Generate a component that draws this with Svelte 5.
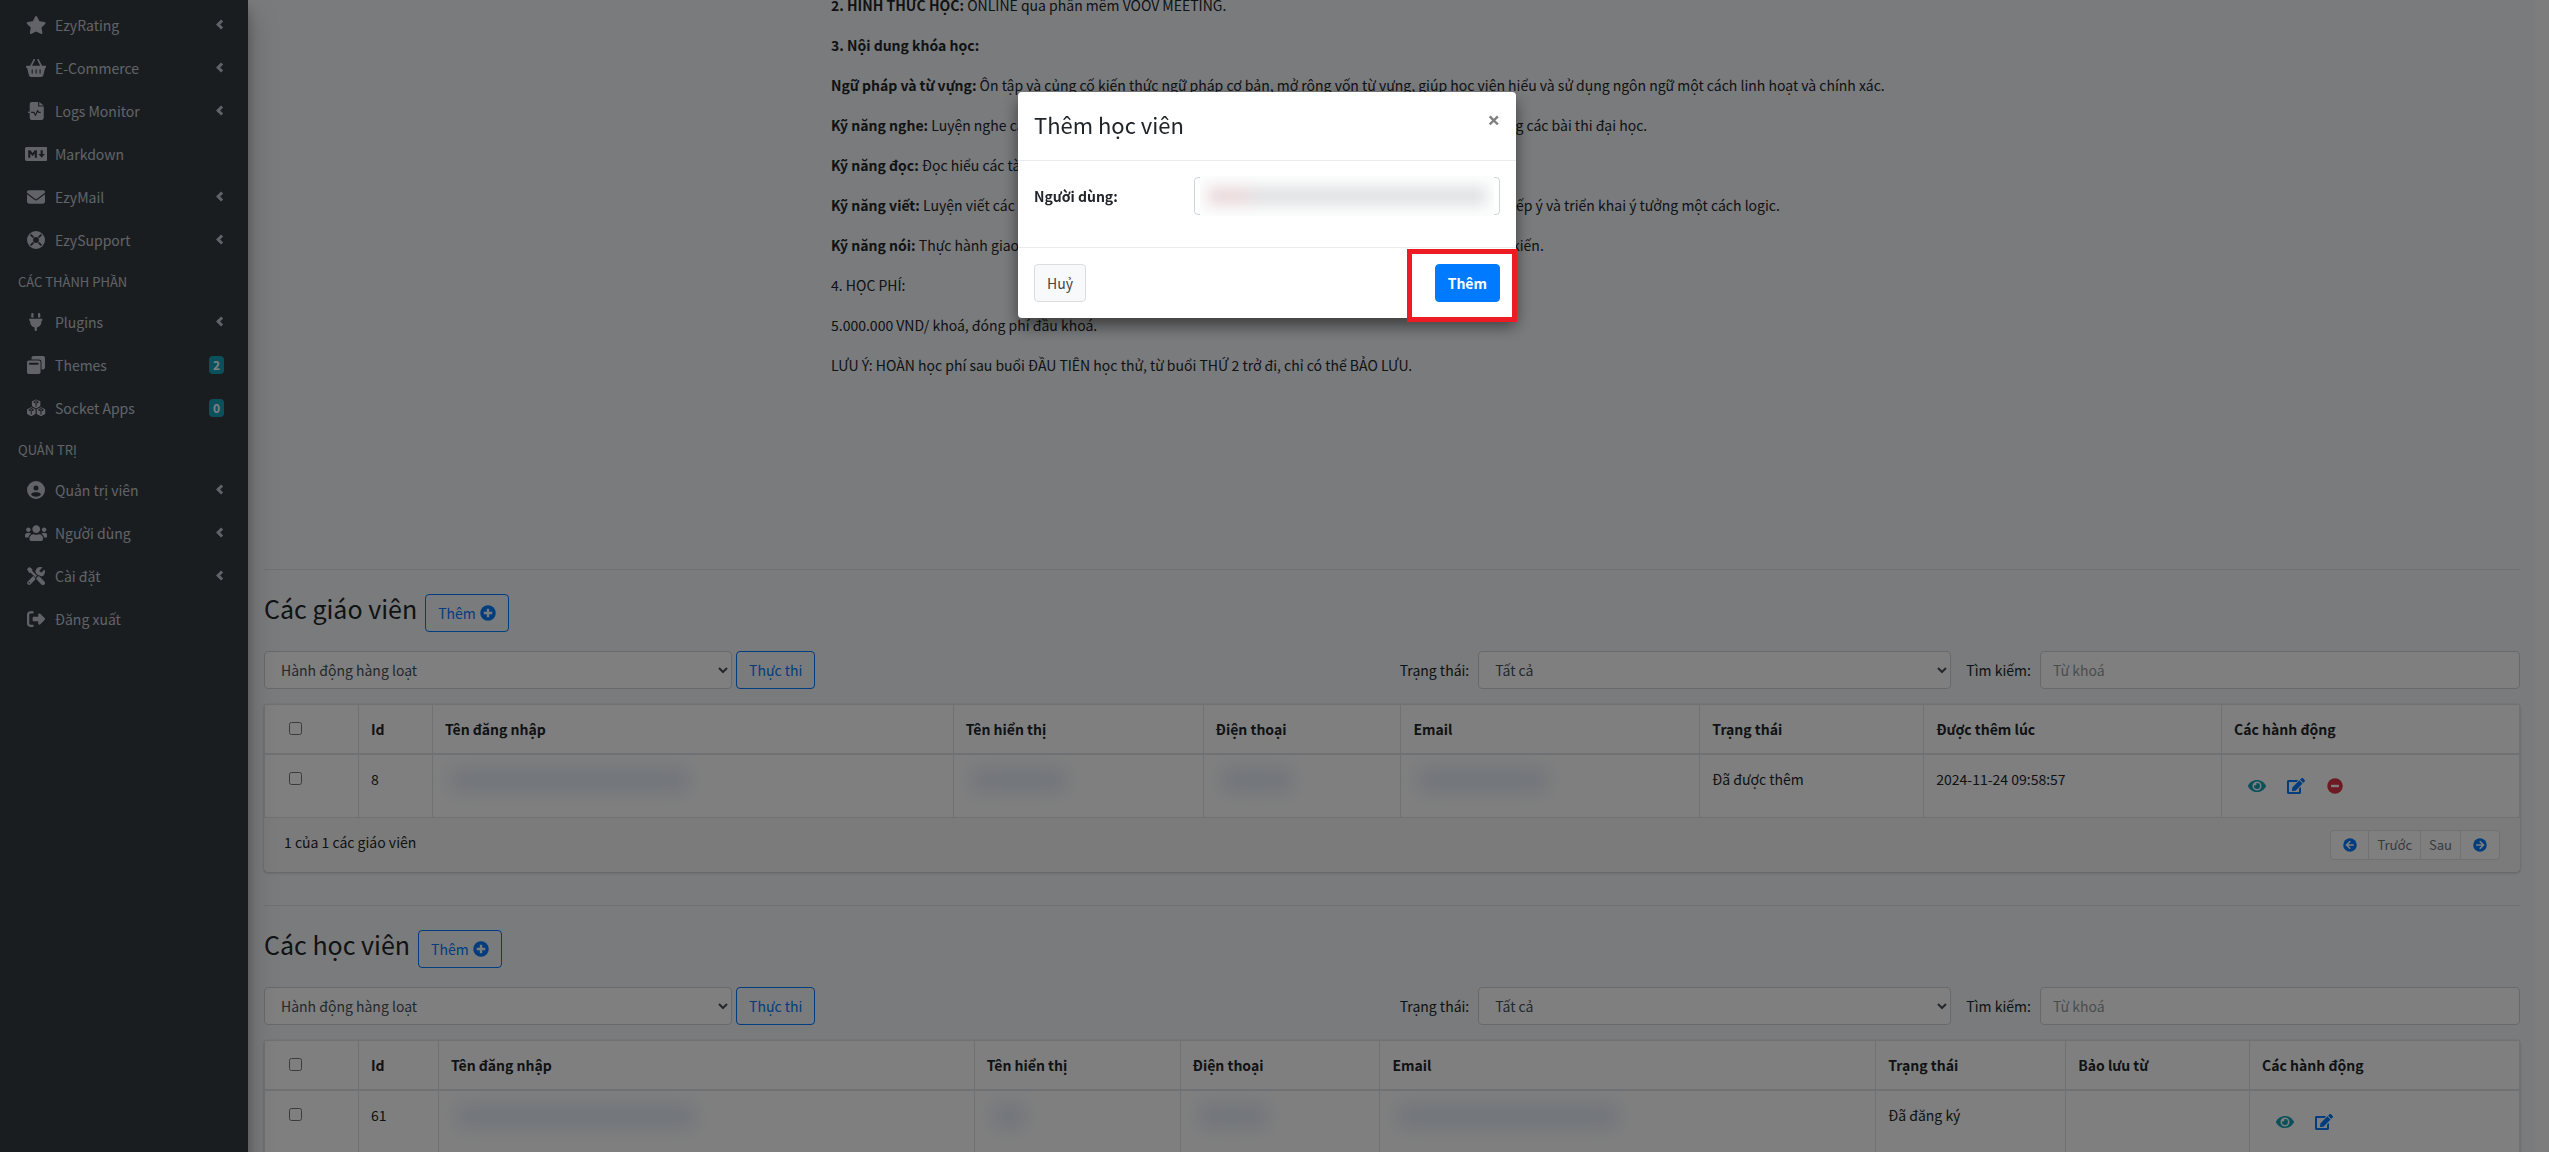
<script>
	const bg = '#343a40'
	const hex = (x, y) => `<path d="M${x} ${y - 132}l120 54v136l-120 66-120-66v-136z"/><path d="M${x - 74} ${y - 58}L${x} ${y - 26}l74-32M${x} ${y - 26}v100M${x - 50} ${y - 70}l50-22 50 22" fill="none" stroke="${bg}" stroke-width="30"/>`

	// [viewBox width, markup], all icons are 512 high
	const icons = {
		star: [576, '<path d="M259.3 17.8L194 150.2 47.9 171.5c-26.2 3.8-36.7 36.1-17.7 54.6l105.7 103-25 145.5c-4.5 26.3 23.2 46 46.4 33.7L288 439.6l130.7 68.7c23.2 12.2 50.9-7.4 46.4-33.7l-25-145.5 105.7-103c19-18.5 8.5-50.8-17.7-54.6L382 150.2 316.7 17.8c-11.7-23.6-45.6-23.9-57.4 0z"/>'],
		basket: [576, '<path d="M253.3 35.1c6.1-11.8 1.5-26.3-10.2-32.4s-26.3-1.5-32.4 10.2L117.6 192H32c-17.7 0-32 14.3-32 32s14.3 32 32 32L83.9 463.5C91 492 116.6 512 146 512H430c29.4 0 55-20 62.1-48.5L544 256c17.7 0 32-14.3 32-32s-14.3-32-32-32H458.4L365.3 12.9C359.2 1.2 344.7-3.4 332.9 2.7s-16.3 20.6-10.2 32.4L404.3 192H171.7L253.3 35.1zM192 304v96c0 8.8-7.2 16-16 16s-16-7.2-16-16V304c0-8.8 7.2-16 16-16s16 7.2 16 16zm96-16c8.8 0 16 7.2 16 16v96c0 8.8-7.2 16-16 16s-16-7.2-16-16V304c0-8.8 7.2-16 16-16zm128 16v96c0 8.8-7.2 16-16 16s-16-7.2-16-16V304c0-8.8 7.2-16 16-16s16 7.2 16 16z"/>'],
		logs: [448, `<path d="M112 0h176v128h160v320a64 64 0 0 1-64 64H112a64 64 0 0 1-64-64V64A64 64 0 0 1 112 0z"/><path d="M320 0l128 96H320z"/><path d="M48 296h120l44 80 60-130 34 50h54" fill="none" stroke="${bg}" stroke-width="34"/><path d="M0 274h90v36H0z"/>`],
		markdown: [640, '<path d="M593.8 59.1H46.2C20.7 59.1 0 79.8 0 105.2v301.5c0 25.5 20.7 46.2 46.2 46.2h547.7c25.5 0 46.2-20.7 46.1-46.1V105.2c0-25.4-20.7-46.1-46.2-46.1zM338.5 360.6H277v-120l-61.5 76.9-61.5-76.9v120H92.3V151.4h61.5l61.5 76.9 61.5-76.9h61.5v209.2zm135.3 3.1L381.5 256H443V151.4h61.5V256H566z"/>'],
		mail: [512, '<path d="M48 64C21.5 64 0 85.5 0 112c0 15.1 7.1 29.3 19.2 38.4L236.8 313.6c11.4 8.5 27 8.5 38.4 0L492.8 150.4c12.1-9.1 19.2-23.3 19.2-38.4c0-26.5-21.5-48-48-48H48zM0 176V384c0 35.3 28.7 64 64 64H448c35.3 0 64-28.7 64-64V176L294.4 339.2c-22.8 17.1-54 17.1-76.8 0L0 176z"/>'],
		support: [512, `<circle cx="256" cy="256" r="256"/><circle cx="256" cy="256" r="84" fill="${bg}"/><path d="M116 116l52 52M396 116l-52 52M116 396l52-52M396 396l-52-52" stroke="${bg}" stroke-width="52" stroke-linecap="round"/>`],
		plug: [384, '<path d="M96 0C78.3 0 64 14.3 64 32v96h64V32c0-17.7-14.3-32-32-32zM288 0c-17.7 0-32 14.3-32 32v96h64V32c0-17.7-14.3-32-32-32zM32 160c-17.7 0-32 14.3-32 32s14.3 32 32 32v32c0 77.4 55 142 128 156.8V480c0 17.7 14.3 32 32 32s32-14.3 32-32V412.8C297 398 352 333.4 352 256V224c17.7 0 32-14.3 32-32s-14.3-32-32-32H32z"/>'],
		themes: [512, `<rect x="128" width="384" height="384" rx="56"/><rect x="-28" y="96" width="440" height="444" rx="70" fill="${bg}"/><rect y="128" width="384" height="384" rx="52"/><path d="M80 192h224a16 16 0 0 1 0 56H80a16 16 0 0 1 0-56z" fill="${bg}"/>`],
		cubes: [576, hex(288, 144) + hex(150, 366) + hex(426, 366)],
		user: [512, '<path d="M399 384.2C376.9 345.8 335.4 320 288 320H224c-47.4 0-88.9 25.8-111 64.2c35.2 39.2 86.2 63.8 143 63.8s107.8-24.7 143-63.8zM0 256a256 256 0 1 1 512 0A256 256 0 1 1 0 256zm256 16a72 72 0 1 0 0-144 72 72 0 1 0 0 144z" fill-rule="evenodd"/>'],
		users: [640, '<path d="M96 224c35.3 0 64-28.7 64-64s-28.7-64-64-64-64 28.7-64 64 28.7 64 64 64zm448 0c35.3 0 64-28.7 64-64s-28.7-64-64-64-64 28.7-64 64 28.7 64 64 64zm32 32h-64c-17.6 0-33.5 7.1-45.1 18.6 40.3 22.1 68.9 62 75.1 109.4h66c17.7 0 32-14.3 32-32v-32c0-35.3-28.7-64-64-64zm-256 0c61.9 0 112-50.1 112-112S381.9 32 320 32 208 82.1 208 144s50.1 112 112 112zm76.8 32h-8.3c-20.8 10-43.9 16-68.5 16s-47.6-6-68.5-16h-8.3C179.6 288 128 339.6 128 403.2V432c0 26.5 21.5 48 48 48h288c26.5 0 48-21.5 48-48v-28.8c0-63.6-51.6-115.2-115.2-115.2zm-223.7-13.4C161.5 263.1 145.6 256 128 256H64c-35.3 0-64 28.7-64 64v32c0 17.7 14.3 32 32 32h65.9c6.3-47.4 34.9-87.3 75.2-109.4z"/>'],
		tools: [512, `<path d="M62 450L330 182" stroke="currentColor" stroke-width="112" stroke-linecap="round"/><circle cx="376" cy="136" r="136"/><path d="M376 136L530-18" stroke="${bg}" stroke-width="84"/><circle cx="66" cy="446" r="22" fill="${bg}"/><path d="M90 90l220 220" stroke="${bg}" stroke-width="112"/><path d="M0 64L64 0l86 60v56l180 180-44 44-180-180H60z"/><path d="M330 330l116 116" stroke="${bg}" stroke-width="180" stroke-linecap="round"/><path d="M330 330l122 122" stroke="currentColor" stroke-width="120" stroke-linecap="round"/>`],
		exit: [512, '<path d="M377.9 105.9L500.7 228.7c7.2 7.2 11.3 17.1 11.3 27.3s-4.1 20.1-11.3 27.3L377.9 406.1c-6.4 6.4-15 9.9-24 9.9c-18.7 0-33.9-15.2-33.9-33.9l0-62.1-128 0c-17.7 0-32-14.3-32-32l0-64c0-17.7 14.3-32 32-32l128 0 0-62.1c0-18.7 15.2-33.9 33.9-33.9c9 0 17.6 3.6 24 9.9zM160 96L96 96c-17.7 0-32 14.3-32 32l0 256c0 17.7 14.3 32 32 32l64 0c17.7 0 32 14.3 32 32s-14.3 32-32 32l-64 0c-53 0-96-43-96-96L0 128C0 75 43 32 96 32l64 0c17.7 0 32 14.3 32 32s-14.3 32-32 32z"/>'],
		angle: [256, '<path d="M196 112L68 240l128 128" fill="none" stroke="currentColor" stroke-width="96"/>'],
		plus: [512, '<circle cx="256" cy="256" r="248"/><path d="M256 120v272M120 256h272" stroke="#f4f6f9" stroke-width="76"/>'],
		minus: [512, '<circle cx="256" cy="256" r="248"/><path d="M130 256h252" stroke="#fff" stroke-width="76"/>'],
		left: [512, '<circle cx="256" cy="256" r="248"/><path d="M396 256H136M264 120L128 256l136 136" fill="none" stroke="#fff" stroke-width="58"/>'],
		right: [512, '<circle cx="256" cy="256" r="248"/><path d="M116 256h260M248 120l136 136-136 136" fill="none" stroke="#fff" stroke-width="58"/>'],
		edit: [576, '<path d="M402.6 83.2l90.2 90.2c3.8 3.8 3.8 10 0 13.8L274.4 405.6l-92.8 10.3c-12.4 1.4-22.9-9.1-21.5-21.5l10.3-92.8L388.8 83.2c3.8-3.8 10-3.8 13.8 0zm162-22.9l-48.8-48.8c-15.2-15.2-39.9-15.2-55.2 0l-35.4 35.4c-3.8 3.8-3.8 10 0 13.8l90.2 90.2c3.8 3.8 10 3.8 13.8 0l35.4-35.4c15.2-15.3 15.2-40 0-55.2zM384 346.2V448H64V128h229.8c3.2 0 6.2-1.3 8.5-3.5l40-40c7.6-7.6 2.2-20.5-8.5-20.5H48C21.5 64 0 85.5 0 112v352c0 26.5 21.5 48 48 48h352c26.5 0 48-21.5 48-48V306.2c0-10.7-12.9-16-20.5-8.5l-40 40c-2.2 2.3-3.5 5.3-3.5 8.5z"/>'],
		eye: [576, '<path d="M572.52 241.4C518.29 135.59 410.93 64 288 64S57.68 135.64 3.48 241.41a32.35 32.35 0 0 0 0 29.19C57.71 376.41 165.07 448 288 448s230.32-71.64 284.52-177.41a32.35 32.35 0 0 0 0-29.19zM288 400a144 144 0 1 1 144-144 143.93 143.93 0 0 1-144 144zm0-240a95.31 95.31 0 0 0-25.31 3.79 47.85 47.85 0 0 1-66.9 66.9A95.78 95.78 0 1 0 288 160z"/>']
	}

	const menu = [
		{ icon: 'star', label: 'EzyRating', more: true },
		{ icon: 'basket', label: 'E-Commerce', more: true },
		{ icon: 'logs', label: 'Logs Monitor', more: true },
		{ icon: 'markdown', label: 'Markdown' },
		{ icon: 'mail', label: 'EzyMail', more: true },
		{ icon: 'support', label: 'EzySupport', more: true },
		{ header: 'CÁC THÀNH PHẦN' },
		{ icon: 'plug', label: 'Plugins', more: true },
		{ icon: 'themes', label: 'Themes', badge: '2' },
		{ icon: 'cubes', label: 'Socket Apps', badge: '0' },
		{ header: 'QUẢN TRỊ' },
		{ icon: 'user', label: 'Quản trị viên', more: true },
		{ icon: 'users', label: 'Người dùng', more: true },
		{ icon: 'tools', label: 'Cài đặt', more: true },
		{ icon: 'exit', label: 'Đăng xuất' }
	]

	const course = [
		['2. HÌNH THỨC HỌC:', 'ONLINE qua phần mềm VOOV MEETING.'],
		['3. Nội dung khóa học:', ''],
		['Ngữ pháp và từ vựng:', 'Ôn tập và củng cố kiến thức ngữ pháp cơ bản, mở rộng vốn từ vựng, giúp học viên hiểu và sử dụng ngôn ngữ một cách linh hoạt và chính xác.'],
		['Kỹ năng nghe:', 'Luyện nghe các đoạn hội thoại, bài giảng và bản tin ngắn, làm quen với những câu hỏi trong các bài thi đại học.'],
		['Kỹ năng đọc:', 'Đọc hiểu các tài liệu, bài báo, đoạn văn học thuật và trả lời câu hỏi.'],
		['Kỹ năng viết:', 'Luyện viết các câu văn, bài luận, thư từ và báo cáo, hướng dẫn học viên cách lập dàn ý, sắp xếp ý và triển khai ý tưởng một cách logic.'],
		['Kỹ năng nói:', 'Thực hành giao tiếp qua các tình huống thực tế, thảo luận nhóm, thuyết trình và trình bày ý kiến.'],
		['', '4. HỌC PHÍ:'],
		['', '5.000.000 VND/ khoá, đóng phí đầu khoá.'],
		['', 'LƯU Ý: HOÀN học phí sau buổi ĐẦU TIÊN học thử, từ buổi THỨ 2 trở đi, chỉ có thể BẢO LƯU.']
	]

	// a number in a row is the width of a masked value
	const sections = [
		{
			id: 'teachers',
			title: 'Các giáo viên',
			columns: [['Id', 74], ['Tên đăng nhập', 521], ['Tên hiển thị', 250], ['Điện thoại', 198], ['Email', 299], ['Trạng thái', 224], ['Được thêm lúc', 298], ['Các hành động', 298]],
			row: ['8', 240, 96, 72, 130, 'Đã được thêm', '2024-11-24 09:58:57'],
			removable: true,
			footer: '1 của 1 các giáo viên'
		},
		{
			id: 'students',
			title: 'Các học viên',
			columns: [['Id', 80], ['Tên đăng nhập', 536], ['Tên hiển thị', 206], ['Điện thoại', 200], ['Email', 496], ['Trạng thái', 190], ['Bảo lưu từ', 184], ['Các hành động', 270]],
			row: ['61', 240, 34, 70, 222, 'Đã đăng ký', ''],
			footer: '1 của 1 các học viên'
		}
	]
</script>

{#snippet icon(name)}
	<svg class="icon" viewBox="0 0 {icons[name][0]} 512" style="width: {icons[name][0] / 512}em" aria-hidden="true">{@html icons[name][1]}</svg>
{/snippet}

<div class="shell">
	<aside>
		<nav>
			{#each menu as item}
				{#if item.header}
					<div class="nav-header">{item.header}</div>
				{:else}
					<a href="#menu" class="nav-item">
						<span class="nav-icon">{@render icon(item.icon)}</span>
						<span class="nav-label">{item.label}</span>
						{#if item.more}{@render icon('angle')}{/if}
						{#if item.badge}<span class="badge">{item.badge}</span>{/if}
					</a>
				{/if}
			{/each}
		</nav>
	</aside>

	<main>
		<article>
			{#each course as [term, text]}
				<p>{#if term}<b>{term}</b>{/if} {text}</p>
			{/each}
		</article>

		{#each sections as s}
			<section>
				<div class="title">
					<h2>{s.title}</h2>
					<button class="btn outline">Thêm {@render icon('plus')}</button>
				</div>

				<div class="toolbar">
					<select class="control" aria-label="Hành động hàng loạt">
						<option>Hành động hàng loạt</option>
					</select>
					<button class="btn outline">Thực thi</button>
					<label class="status-label" for="{s.id}-status">Trạng thái:</label>
					<select class="control" id="{s.id}-status">
						<option>Tất cả</option>
					</select>
					<label class="search-label" for="{s.id}-search">Tìm kiếm:</label>
					<input class="control" id="{s.id}-search" type="text" placeholder="Từ khoá" />
				</div>

				<div class="card">
					<table>
						<colgroup>
							<col style="width: {94 / 22.56}%" />
							{#each s.columns as [, w]}<col style="width: {w / 22.56}%" />{/each}
						</colgroup>
						<thead>
							<tr>
								<th class="check"><input type="checkbox" aria-label="Chọn tất cả" /></th>
								{#each s.columns as [name]}<th>{name}</th>{/each}
							</tr>
						</thead>
						<tbody>
							<tr>
								<td class="check"><input type="checkbox" aria-label="Chọn" /></td>
								{#each s.row as cell}
									<td>
										{#if typeof cell === 'number'}
											<div class="mask" style="width: {cell}px"></div>
										{:else}
											{cell}
										{/if}
									</td>
								{/each}
								<td>
									<div class="actions">
										<button class="view" aria-label="Xem">{@render icon('eye')}</button>
										<button class="edit" aria-label="Sửa">{@render icon('edit')}</button>
										{#if s.removable}
											<button class="remove" aria-label="Xoá">{@render icon('minus')}</button>
										{/if}
									</div>
								</td>
							</tr>
						</tbody>
					</table>
					<footer>
						<span>{s.footer}</span>
						<div class="pager">
							<button aria-label="Trang đầu">{@render icon('left')}</button>
							<button>Trước</button>
							<button>Sau</button>
							<button aria-label="Trang cuối">{@render icon('right')}</button>
						</div>
					</footer>
				</div>
			</section>
		{/each}
	</main>
</div>

<div class="backdrop">
	<div class="modal" role="dialog" aria-labelledby="modal-title">
		<div class="modal-header">
			<h4 id="modal-title">Thêm học viên</h4>
			<button class="close" aria-label="Đóng">×</button>
		</div>
		<div class="modal-body">
			<label for="user">Người dùng:</label>
			<div class="user-field">
				<input class="control" id="user" type="text" />
				<div class="user-mask"><i></i></div>
			</div>
		</div>
		<div class="modal-footer">
			<button class="btn light">Huỷ</button>
			<button class="btn primary">Thêm</button>
			<div class="highlight"></div>
		</div>
	</div>
</div>

<style>
	:global(body) {
		margin: 0;
		overflow: hidden;
		background: #fafafa;
		color: #212529;
		font-family: "Noto Sans CJK SC", "Noto Sans", sans-serif;
		font-size: 14px;
		line-height: 24px;
	}
	:global(*) {box-sizing: border-box;}
	button, input, select {font: inherit; margin: 0;}
	button {cursor: pointer;}
	a {text-decoration: none;}

	.icon {
		height: 1em;
		fill: currentColor;
		flex: none;
		display: block;
	}

	.shell {
		display: grid;
		grid-template-columns: 248px minmax(0, 1fr);
		height: 100vh;
		margin-right: 14px;
		overflow: hidden;
		background: #f4f6f9;
	}

	aside {
		background: #343a40;
		color: #c2c7d0;
		z-index: 1;
		box-shadow: 0 14px 28px rgba(0, 0, 0, .25), 0 10px 10px rgba(0, 0, 0, .22);
		padding: 5px 8px;
	}
	.nav-item {
		display: flex;
		align-items: center;
		height: 40px;
		margin-bottom: 3px;
		padding: 0 16px 0 12px;
		color: inherit;
	}
	.nav-item > .icon {font-size: 16px;}
	.nav-icon {
		display: flex;
		justify-content: center;
		width: 32px;
		margin-right: 3px;
		font-size: 18px;
	}
	.nav-label {flex: 1;}
	.nav-header {
		height: 39px;
		padding: 7px 10px;
		font-size: 13px;
	}
	.badge {
		padding: 0 4px;
		border-radius: 4px;
		background: #17a2b8;
		color: #fff;
		font-size: 12px;
		font-weight: bold;
		line-height: 18px;
	}

	main {
		margin-top: -7px;
		padding: 0 15px 0 16px;
	}
	article {
		height: 576px;
		margin: 0 -8px;
		padding-left: calc(25% + 11px);
	}
	p {margin: 0 0 16px;}

	section {
		border-top: 1px solid #dfe1e4;
		padding: 24px 0 33px;
	}
	.title {
		display: flex;
		align-items: baseline;
		gap: 8px;
		margin-bottom: 19px;
	}
	h2, h4 {margin: 0; font-weight: normal;}
	h2 {font-size: 25px; line-height: 28px;}

	.btn {
		display: inline-flex;
		align-items: center;
		gap: 4px;
		height: 38px;
		padding: 0 12px;
		border: 1px solid;
		border-radius: 4px;
		white-space: nowrap;
	}
	.btn .icon {font-size: 16px;}
	.outline {background: none; border-color: #007bff; color: #007bff;}
	.light {background: #f8f9fa; border-color: #ddd; color: #444;}
	.primary {background: #007bff; border-color: #007bff; color: #fff; font-weight: bold;}

	.toolbar {
		display: grid;
		grid-template-columns: 466fr auto 660fr 471fr auto 478fr;
		align-items: center;
		margin-bottom: 15px;
	}
	.toolbar .btn {margin-left: 4px;}
	.status-label {text-align: right; padding-right: 9px;}
	.search-label {padding: 0 9px 0 15px;}
	.control {
		width: 100%;
		height: 38px;
		padding: 6px 12px;
		border: 1px solid #ced4da;
		border-radius: 4px;
		background: #fff;
		color: #495057;
	}
	.control::placeholder {color: #939ba2;}

	.card {
		border-radius: 4px;
		background: #fff;
		box-shadow: 0 0 1px rgba(0, 0, 0, .125), 0 1px 3px rgba(0, 0, 0, .2);
	}
	table {
		width: 100%;
		table-layout: fixed;
		border-collapse: collapse;
	}
	th, td {
		border: 1px solid #dee2e6;
		padding: 12px;
		text-align: left;
		vertical-align: top;
	}
	th {border-bottom-width: 2px;}
	.check {padding-left: 24px;}
	.check input {display: block; margin: 5px 0;}
	.mask {
		height: 26px;
		margin: 0 5px;
		border-radius: 8px;
		background: #e4ebf7;
		filter: blur(9px);
	}
	.actions {display: flex; padding-left: 3px;}
	.actions button {
		display: flex;
		align-items: center;
		justify-content: center;
		width: 39px;
		height: 38px;
		padding: 0;
		border: 0;
		background: none;
		font-size: 16px;
	}
	.actions .view {color: #17a2b8;}
	.actions .edit {color: #007bff;}
	.actions .remove {color: #dc3545;}

	footer {
		display: flex;
		justify-content: space-between;
		padding: 12px 20px;
		background: rgba(0, 0, 0, .03);
	}
	.pager {display: flex;}
	.pager button {
		display: flex;
		align-items: center;
		justify-content: center;
		min-width: 39px;
		height: 30px;
		padding: 0 8px;
		border: 1px solid #dee2e6;
		border-left-width: 0;
		background: #fff;
		color: #6c757d;
		font-size: 13px;
	}
	.pager button:first-child {border-left-width: 1px; border-radius: 4px 0 0 4px;}
	.pager button:last-child {border-radius: 0 4px 4px 0;}
	.pager .icon {color: #007bff; font-size: 14px;}

	.backdrop {
		position: fixed;
		inset: 0;
		z-index: 10;
		display: flex;
		align-items: flex-start;
		justify-content: center;
		padding: 92px 15px 0 0;
		background: rgba(0, 0, 0, .5);
	}
	.modal {
		width: 498px;
		border-radius: 4px;
		background: #fff;
		box-shadow: 0 8px 16px rgba(0, 0, 0, .5);
	}
	.modal-header {
		display: flex;
		justify-content: space-between;
		padding: 16px 16px 20px;
		border-bottom: 1px solid #e9ecef;
	}
	h4 {font-size: 22px; line-height: 32px;}
	.close {
		align-self: flex-start;
		padding: 0;
		border: 0;
		background: none;
		color: #7f7f7f;
		font-family: "Open Sans", sans-serif;
		font-size: 22px;
		font-weight: bold;
		line-height: 22px;
	}
	.modal-body {
		display: grid;
		grid-template-columns: 160px 1fr;
		align-items: center;
		padding: 16px 16px 32px;
	}
	.modal-body label {font-weight: bold;}
	.user-field {position: relative;}
	.user-mask {
		position: absolute;
		inset: -1px 6px;
		display: flex;
		align-items: center;
		padding: 0 8px;
		overflow: hidden;
		background: #fcfdfd;
	}
	.user-mask i {
		width: 100%;
		height: 18px;
		background: linear-gradient(90deg, #ead8da 32px, #dfe0e2 50px);
		filter: blur(7px);
	}
	.modal-footer {
		position: relative;
		display: flex;
		justify-content: space-between;
		padding: 16px;
		border-top: 1px solid #e9ecef;
	}
	.highlight {
		position: absolute;
		top: 1px;
		right: -1px;
		bottom: -4px;
		width: 110px;
		border: 5px solid #ed1c24;
		pointer-events: none;
	}
</style>
